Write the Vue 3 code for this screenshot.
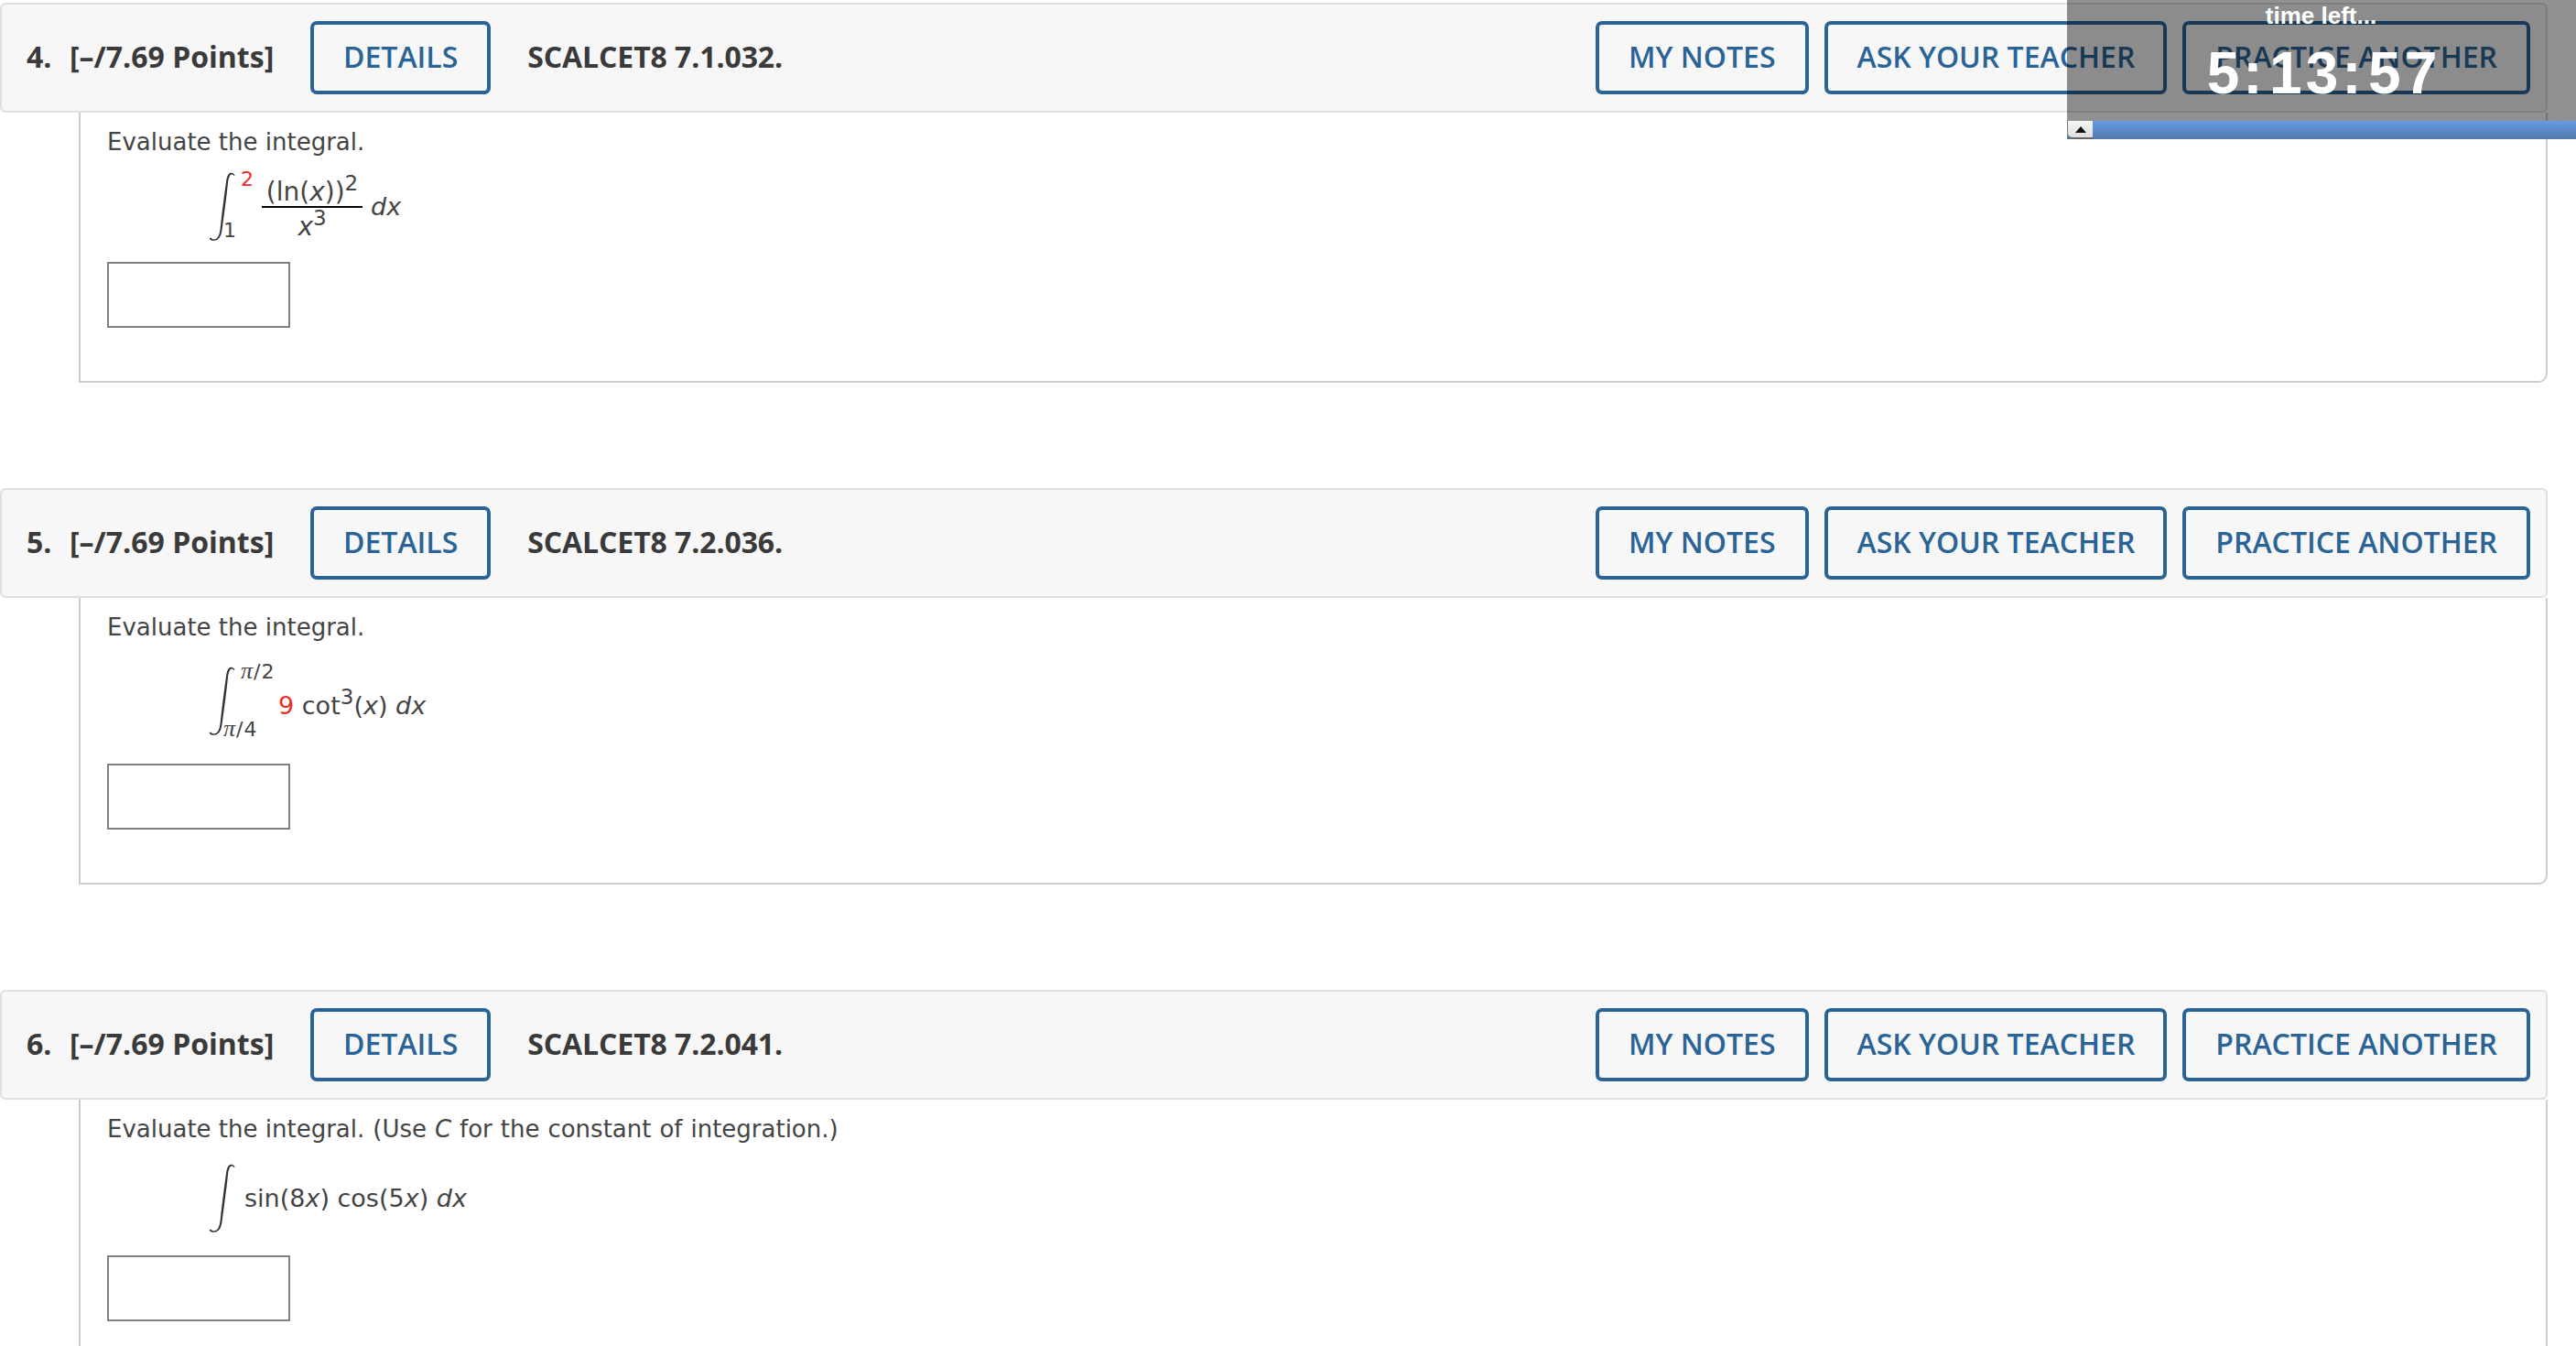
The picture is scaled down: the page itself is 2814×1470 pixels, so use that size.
<template>
  <div class="page">
    <section v-for="q in questions" :key="q.num" class="question">
      <header class="q-head">
        <span class="q-num">{{ q.num }}.</span>
        <span class="q-points">[–/7.69 Points]</span>
        <button class="btn btn-details">DETAILS</button>
        <span class="q-code">{{ q.code }}</span>
        <div class="q-actions">
          <button class="btn btn-notes">MY NOTES</button>
          <button class="btn btn-ask">ASK YOUR TEACHER</button>
          <button class="btn">PRACTICE ANOTHER</button>
        </div>
      </header>

      <div class="q-body">
        <p class="prompt">Evaluate the integral.<span v-if="q.num === 6" class="prompt-note"> (Use <i>C</i> for the constant of integration.)</span></p>

        <div class="math" :class="'math-' + q.num">
          <div class="integral">
            <svg width="29" height="75" viewBox="0 0 29 75">
              <path d="M28.6 3.2C27.6 1.6 25.6.4 23.9.8 20.9 1.5 19.6 6 18.9 11.5C16.6 28 14.2 46 12.6 62 11.9 67.6 10.4 72.6 6.6 73.2 4.8 73.5 3.2 72.9 2.4 71.4L.5 72.4C1.6 74.2 3.6 75 6 74.8 11.6 74.4 13.8 69 14.6 62.5C16.8 46 19.4 28 21 12 21.6 7.4 22.6 3 24.8 2.6 26 2.4 27 3 27.6 3.9Z" fill="#333" />
            </svg>
            <template v-if="q.num === 4">
              <span class="limit limit-top red">2</span>
              <span class="limit limit-bottom">1</span>
            </template>
            <template v-if="q.num === 5">
              <span class="limit limit-top limit-pi"><i class="pi">π</i>/2</span>
              <span class="limit limit-bottom limit-pi"><i class="pi">π</i>/4</span>
            </template>
          </div>

          <template v-if="q.num === 4">
            <div class="frac">
              <span class="frac-top">(ln(<i>x</i>))<sup>2</sup></span>
              <span class="frac-bottom"><i>x</i><sup>3</sup></span>
            </div>
            <span class="expr"><i>dx</i></span>
          </template>
          <span v-if="q.num === 5" class="expr"><span class="red">9</span> cot<sup>3</sup>(<i>x</i>) <i>dx</i></span>
          <span v-if="q.num === 6" class="expr">sin(8<i>x</i>) cos(5<i>x</i>) <i>dx</i></span>
        </div>

        <input class="answer" type="text" />
      </div>
    </section>

    <aside class="timer">
      <div class="timer-pane">
        <div class="timer-label">time left...</div>
        <div class="timer-value">5<span class="colon">:</span>13<span class="colon">:</span>57</div>
      </div>
      <div class="timer-bar">
        <span class="timer-toggle"><span class="arrow"></span></span>
      </div>
    </aside>
  </div>
</template>

<script setup>
const questions = [
  { num: 4, code: 'SCALCET8 7.1.032.' },
  { num: 5, code: 'SCALCET8 7.2.036.' },
  { num: 6, code: 'SCALCET8 7.2.041.' }
]
</script>

<style>
html, body {
  margin: 0;
  overflow: hidden;
  background: #fff;
}
</style>

<style scoped>
.page {
  position: relative;
  height: 1470px;
  overflow: hidden;
  padding-top: 3px;
  box-sizing: border-box;
  background: #fff;
  font-family: "Open Sans", sans-serif;
  color: #3a3a3a;
}

.question {
  width: 2783px;
  margin-bottom: 115px;
}

.q-head {
  display: flex;
  align-items: center;
  height: 120px;
  box-sizing: border-box;
  padding: 0 17px 0 27px;
  background: #f7f7f7;
  border: 2px solid #e0e0e0;
  border-radius: 6px;
  font-size: 32px;
  font-weight: 700;
}

.q-num {
  width: 47px;
  margin-bottom: 3px;
}

.q-points {
  width: 221px;
  margin-right: 42px;
  margin-bottom: 3px;
  white-space: nowrap;
}

.q-code {
  margin-left: 40px;
  margin-bottom: 3px;
  letter-spacing: -0.1px;
  white-space: nowrap;
}

.q-actions {
  display: flex;
  gap: 17px;
  margin-left: auto;
}

.btn {
  height: 80px;
  padding: 0 32px 3px;
  box-sizing: border-box;
  background: transparent;
  border: 4px solid #2a6496;
  border-radius: 7px;
  color: #2a6496;
  font-family: "Open Sans", sans-serif;
  font-size: 32px;
  font-weight: 600;
  white-space: nowrap;
}

.btn-notes {
  padding-left: 32px;
  padding-right: 33px;
}

.btn-ask {
  padding-left: 31px;
  padding-right: 31px;
}

.q-body {
  margin-left: 86px;
  padding: 0 0 58px 29px;
  background: #fff;
  border-left: 2px solid #ccc;
  border-right: 2px solid #ccc;
  border-bottom: 2px solid #ccc;
  border-radius: 0 0 10px 0;
  font-family: "DejaVu Sans", sans-serif;
  font-size: 26px;
  color: #444;
}

.prompt {
  height: 55px;
  margin: 0;
  padding-top: 14px;
  box-sizing: border-box;
  line-height: 36px;
  white-space: nowrap;
}

.prompt-note {
  word-spacing: 0.7px;
}

.math {
  display: flex;
  align-items: center;
  margin-left: 111px;
  font-size: 27px;
  line-height: 1;
  white-space: nowrap;
}

.math-4 { margin-top: 10px; margin-bottom: 23px; }
.math-5 { margin-top: 20px; margin-bottom: 31px; }
.math-6 { margin-top: 15px; margin-bottom: 25px; }

.math sup {
  font-size: 23px;
  line-height: 0;
  vertical-align: 11px;
}

.integral {
  position: relative;
  height: 75px;
  width: 29px;
}

.integral svg {
  display: block;
}

.limit {
  position: absolute;
  font-size: 22px;
  line-height: 1;
}

.limit-top {
  left: 35px;
  top: -3px;
}

.limit-bottom {
  left: 16px;
  bottom: 0;
}

.limit-pi {
  letter-spacing: 1px;
}

.limit-pi.limit-top {
  top: -8px;
}

.limit-pi.limit-bottom {
  bottom: -6px;
}

.pi {
  font-family: "Liberation Serif", serif;
  font-size: 26px;
}

.red {
  color: #ee2e24;
}

.frac {
  display: flex;
  flex-direction: column;
  align-items: center;
  width: 110px;
  margin-left: 29px;
  font-size: 28px;
}

.frac-top {
  height: 38px;
  box-sizing: border-box;
  padding-top: 7px;
  border-bottom: 2px solid #000;
  width: 100%;
  text-align: center;
}

.frac-bottom {
  padding-top: 7px;
}

.expr {
  margin-left: 9px;
}

.math-5 .expr {
  margin-left: 47px;
  padding-top: 10px;
}

.math-6 .expr {
  margin-left: 10px;
}

.answer {
  display: block;
  width: 200px;
  height: 72px;
  box-sizing: border-box;
  padding: 0;
  background: #fff;
  border: 2px solid #808080;
  border-radius: 0;
  outline: none;
}

/* floating countdown in the corner */
.timer {
  position: absolute;
  top: 0;
  right: 0;
  width: 556px;
  font-family: "Liberation Sans", Arial, sans-serif;
  font-weight: 700;
  color: #fff;
  text-align: center;
}

.timer-pane {
  height: 132px;
  box-sizing: border-box;
  padding-right: 1px;
  background: rgba(0, 0, 0, 0.43);
}

.timer-label {
  padding-top: 2px;
  font-size: 26px;
  line-height: 30px;
}

.timer-value {
  margin-top: 16px;
  padding-left: 6px;
  font-size: 64px;
  line-height: 64px;
  letter-spacing: 4px;
}

.colon {
  margin-right: 3.5px;
}

.timer-bar {
  height: 20px;
  background: linear-gradient(#659ce6, #5578ab);
}

.timer-toggle {
  display: flex;
  align-items: center;
  justify-content: center;
  width: 28px;
  height: 20px;
  box-sizing: border-box;
  background: linear-gradient(#f6f6f6, #dedede);
  border-left: 1px solid #777;
  border-bottom: 2px solid #666;
  border-radius: 0 0 0 6px;
}

.arrow {
  width: 0;
  height: 0;
  border-left: 6px solid transparent;
  border-right: 6px solid transparent;
  border-bottom: 7px solid #111;
}
</style>
